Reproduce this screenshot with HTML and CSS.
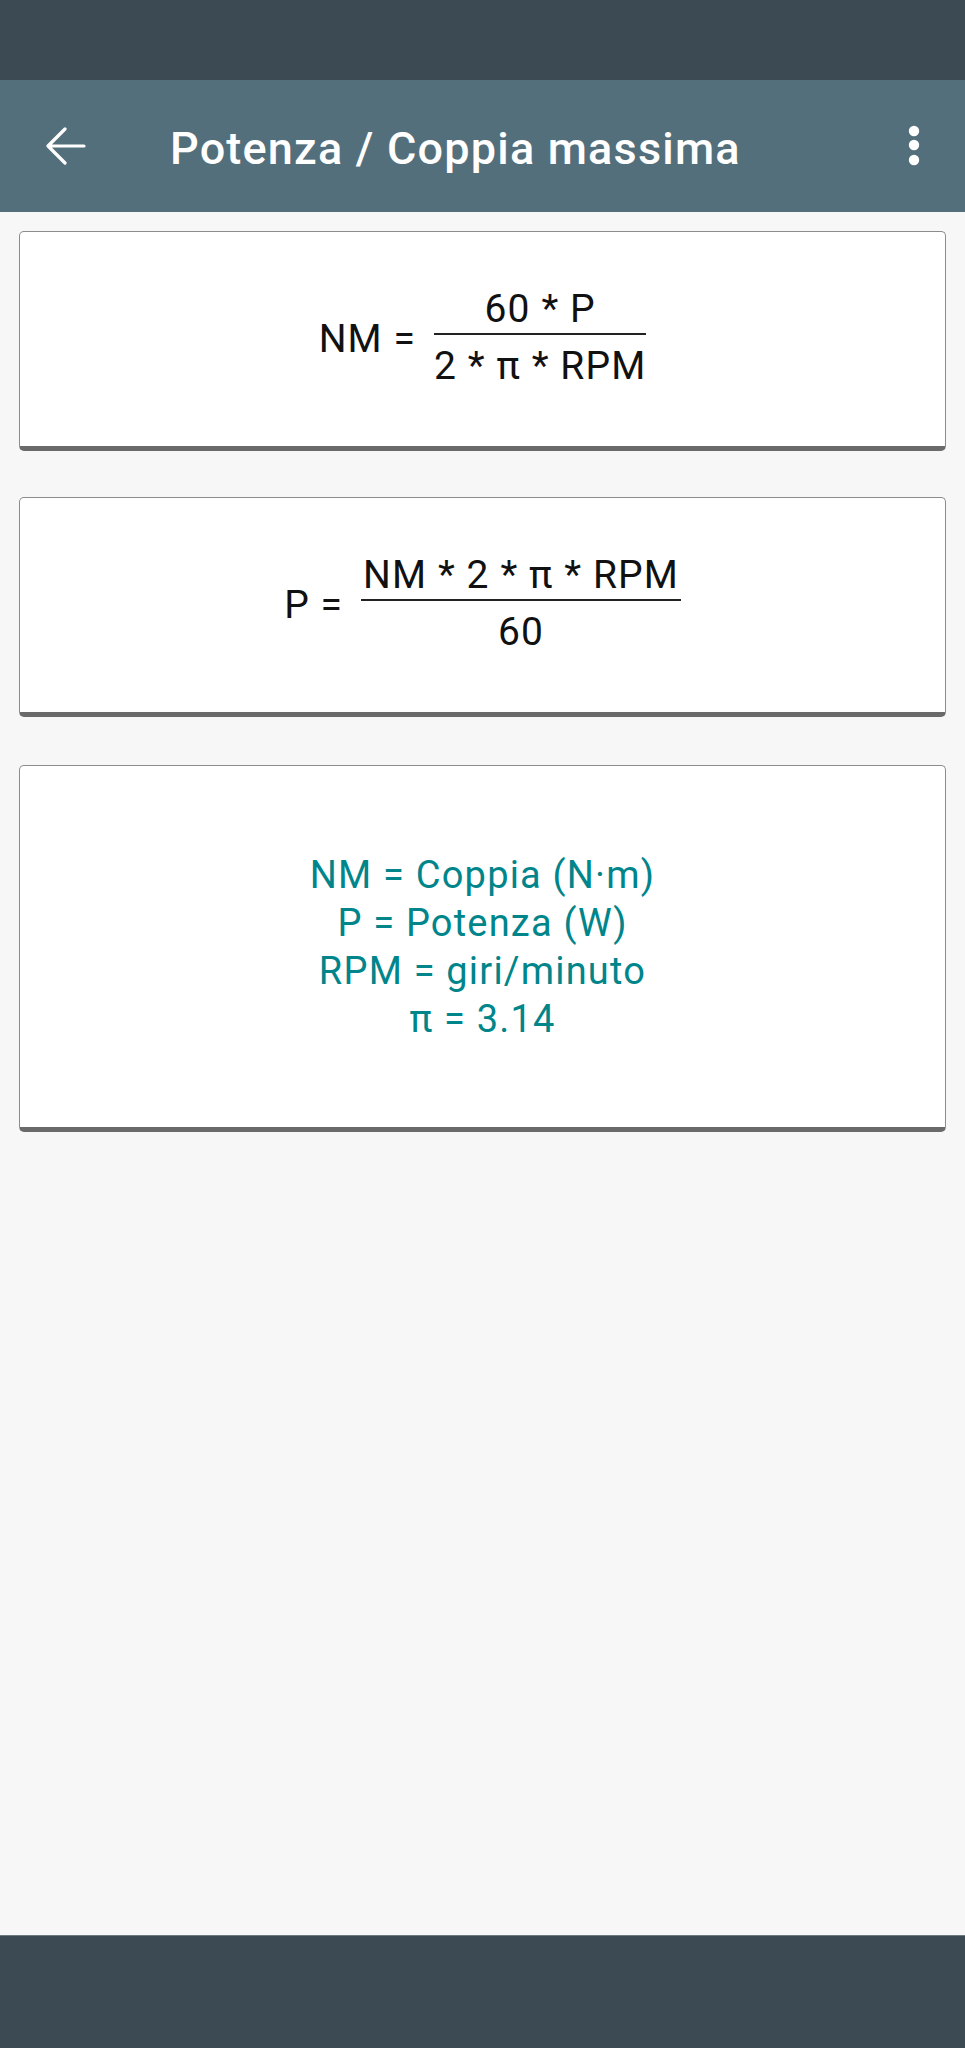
FILE: index.html
```html
<!DOCTYPE html>
<html lang="it">
<head>
  <meta charset="UTF-8">
  <title>Potenza / Coppia massima</title>
  <link rel="stylesheet" href="styles.css">
</head>
<body>

<div class="screen">
  <div class="status-bar"></div>

  <!-- Toolbar -->
  <div class="toolbar">
    <button class="icon-btn back-btn" aria-label="Indietro">
      <svg width="40" height="40" viewBox="0 0 40 40">
        <path d="M38 20H3M19 3L2 20l17 17" fill="none" stroke="#fff" stroke-width="3.2" stroke-linecap="round" stroke-linejoin="round"/>
      </svg>
    </button>
    <div class="toolbar-title">Potenza / Coppia massima</div>
    <button class="icon-btn menu-btn" aria-label="Altro">
      <svg width="12" height="42" viewBox="0 0 12 42">
        <circle cx="6" cy="6" r="5.2" fill="#fff"/>
        <circle cx="6" cy="20" r="5.2" fill="#fff"/>
        <circle cx="6" cy="35" r="5.2" fill="#fff"/>
      </svg>
    </button>
  </div>

  <div class="content">
    <!-- Coppia -->
    <div class="card formula-card">
      <div class="formula">
        <span class="lhs">NM =</span>
        <span class="fraction">
          <span class="num">60 * P</span>
          <span class="den">2 * π * RPM</span>
        </span>
      </div>
    </div>

    <!-- Potenza -->
    <div class="card formula-card">
      <div class="formula">
        <span class="lhs">P =</span>
        <span class="fraction">
          <span class="num">NM * 2 * π * RPM</span>
          <span class="den">60</span>
        </span>
      </div>
    </div>

    <!-- Legenda -->
    <div class="card legend-card">
      <div class="legend">
        <div>NM = Coppia (N·m)</div>
        <div>P = Potenza (W)</div>
        <div>RPM = giri/minuto</div>
        <div>π = 3.14</div>
      </div>
    </div>
  </div>

  <div class="nav-bar"></div>
</div>

</body>
</html>
```

FILE: styles.css
```css
body {
  margin: 0;
  font-family: Roboto, "Noto Sans", Arial, sans-serif;
  background: #f7f7f7;
}

.screen {
  display: flex;
  flex-direction: column;
  height: 2048px;
}

.status-bar {
  height: 80px;
  background: #3c4a53;
}

.toolbar {
  height: 132px;
  background: #546f7c;
  display: flex;
  align-items: center;
  color: white;
}

.icon-btn {
  background: none;
  border: none;
  padding: 0;
  display: flex;
  align-items: center;
  justify-content: center;
  cursor: pointer;
}

.back-btn {
  width: 57px;
  height: 57px;
  margin-left: 37px;
}

.toolbar-title {
  flex: 1;
  margin-left: 76px;
  font-size: 45px;
  font-weight: 500;
  letter-spacing: 1.2px;
  padding-top: 4px;
}

.menu-btn {
  width: 40px;
  height: 57px;
  margin-right: 31px;
}

.content {
  flex: 1;
  padding: 19px 19px 0;
  display: flex;
  flex-direction: column;
  gap: 46px;
}

.card {
  background: #fff;
  border: 1px solid #8c8c8c;
  border-bottom: 5px solid #6a6a6a;
  border-radius: 5px;
}

.formula-card {
  padding: 55px 0 58px;
}

.formula {
  display: flex;
  align-items: center;
  justify-content: center;
  font-size: 39px;
  line-height: 44px;
  letter-spacing: 1.1px;
  color: #111;
}

.lhs {
  margin-right: 18px;
  padding-top: 3px;
}

.fraction {
  display: inline-flex;
  flex-direction: column;
  align-items: center;
}

.num {
  padding: 0 2px 2px;
  border-bottom: 2px solid #222;
  align-self: stretch;
  text-align: center;
}

.den {
  padding-top: 9px;
}

.legend-card {
  margin-top: 2px;
  padding: 85px 0 84px;
}

.legend {
  text-align: center;
  font-size: 38px;
  line-height: 48px;
  letter-spacing: 1.2px;
  color: #00858b;
}

.nav-bar {
  height: 112px;
  background: #3c4a53;
  border-top: 1px solid #6d787e;
}
```
